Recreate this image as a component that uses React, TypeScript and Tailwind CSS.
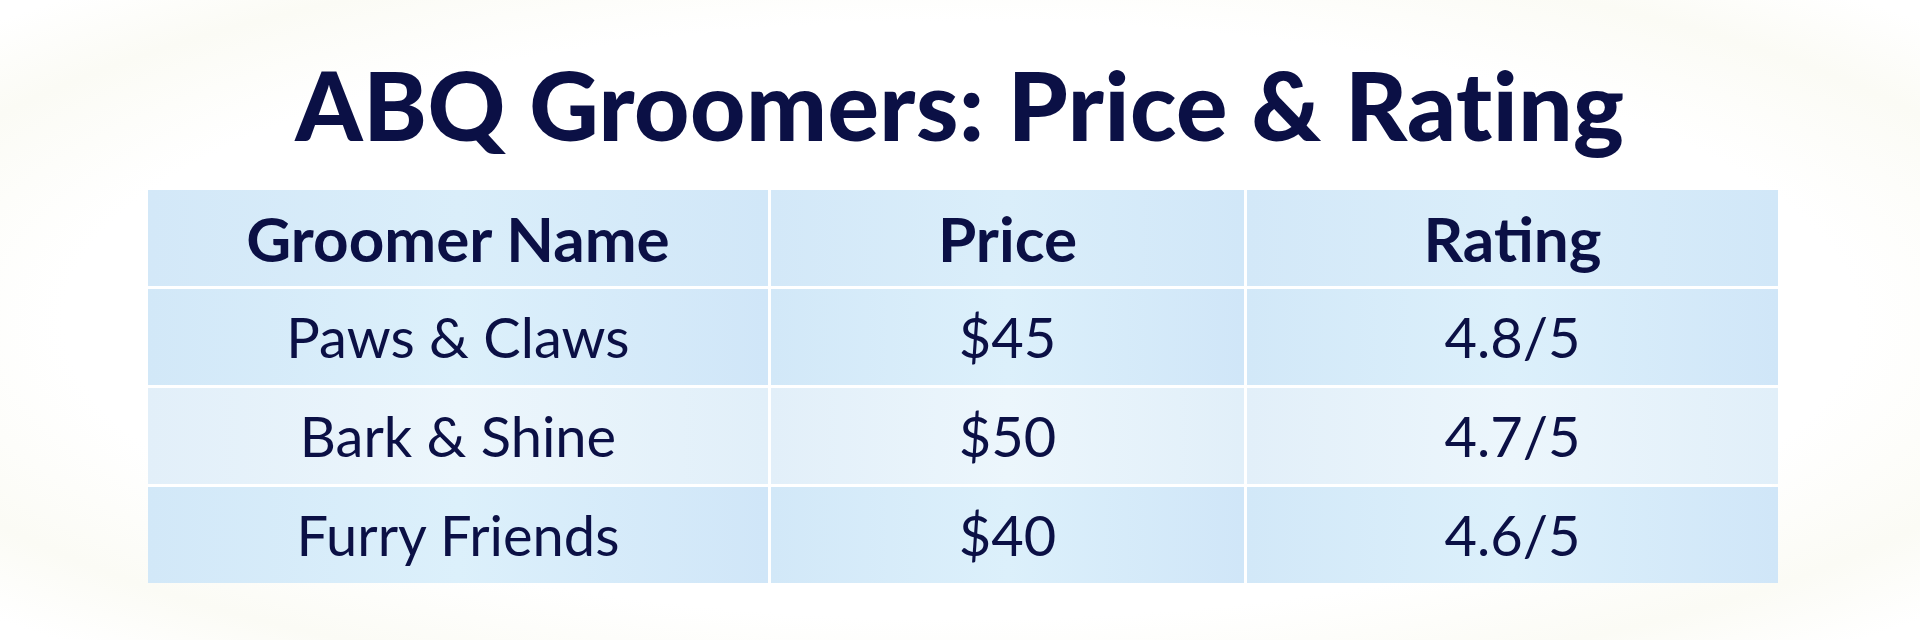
import React from 'react';

export default function App() {
  const rows = [
    { name: 'Paws & Claws', price: '$45', rating: '4.8/5', alt: false },
    { name: 'Bark & Shine', price: '$50', rating: '4.7/5', alt: true },
    { name: 'Furry Friends', price: '$40', rating: '4.6/5', alt: false },
  ];

  const cell = 'flex items-center justify-center h-[96px]';
  const headBg = 'bg-gradient-to-r from-[#d3e8f8] via-[#daeefa] to-[#d1e7f8]';

  return (
    <div className="w-full h-[640px] overflow-hidden bg-[radial-gradient(ellipse_at_center,#ffffff_66%,#fbfbf5_84%,#ffffff_97%)] flex flex-col items-center">
      <h1 className="mt-[56px] text-[96px] leading-[96px] font-black text-[#0b1045] font-['Lato','Liberation_Sans',sans-serif] tracking-[0.5px]">
        ABQ Groomers: Price &amp; Rating
      </h1>

      {/* table */}
      <div className="mt-[38px] w-[1624px] grid grid-cols-[620px_473px_531px] gap-[3px] bg-white text-[#0b1045] font-['Lato','Liberation_Sans',sans-serif]">
        <div className={`${cell} ${headBg} text-[62px] font-bold`}>Groomer Name</div>
        <div className={`${cell} ${headBg} text-[62px] font-bold`}>Price</div>
        <div className={`${cell} ${headBg} text-[62px] font-bold`}>Rating</div>
        {rows.map((r) => {
          const bg = r.alt
            ? 'bg-gradient-to-r from-[#e2eff9] via-[#ecf6fc] to-[#e1eff9]'
            : 'bg-gradient-to-r from-[#d2e8f8] via-[#dcf0fb] to-[#d0e6f8]';
          return (
            <React.Fragment key={r.name}>
              <div className={`${cell} ${bg} text-[56px] font-normal`}>{r.name}</div>
              <div className={`${cell} ${bg} text-[56px] font-normal`}>{r.price}</div>
              <div className={`${cell} ${bg} text-[56px] font-normal`}>{r.rating}</div>
            </React.Fragment>
          );
        })}
      </div>
    </div>
  );
}
